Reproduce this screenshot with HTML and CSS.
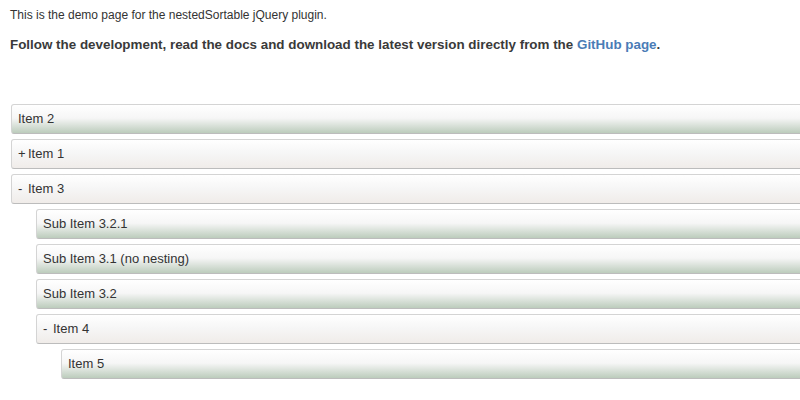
FILE: index.html
```html
<!DOCTYPE html>
<html>
<head>
<meta charset="utf-8">
<link rel="stylesheet" href="styles.css">
</head>
<body>
<p class="intro">This is the demo page for the nestedSortable jQuery plugin.</p>
<p class="follow">Follow the development, read the docs and download the latest version directly from the <a href="#">GitHub page</a>.</p>
<ol class="sortable">
  <li class="leaf"><div class="row">Item 2</div></li>
  <li class="branch"><div class="row"><span class="disclose">+</span>Item 1</div></li>
  <li class="branch"><div class="row"><span class="disclose">-</span>Item 3</div>
    <ol class="sub">
      <li class="leaf"><div class="row">Sub Item 3.2.1</div></li>
      <li class="leaf"><div class="row">Sub Item 3.1 (no nesting)</div></li>
      <li class="leaf"><div class="row">Sub Item 3.2</div></li>
      <li class="branch"><div class="row"><span class="disclose">-</span>Item 4</div>
        <ol class="sub">
          <li class="leaf"><div class="row">Item 5</div></li>
        </ol>
      </li>
    </ol>
  </li>
</ol>
</body>
</html>
```

FILE: styles.css
```css
html, body {
  margin: 0;
  padding: 0;
  overflow: hidden;
  background: #fff;
}
body {
  font-family: "Liberation Sans", Arial, sans-serif;
  font-size: 12px;
  color: #333;
  padding: 0 0 0 10px;
}
.intro {
  margin: 0;
  padding-top: 8px;
  line-height: 15px;
}
.follow {
  margin: 14px 0 0 0;
  font-weight: bold;
  font-size: 13.4px;
  line-height: 16px;
  color: #3a3a3a;
}
.follow a {
  color: #4a7cb6;
  text-decoration: none;
}
ol.sortable {
  list-style: none;
  margin: 51px -40px 0 1px;
  padding: 0;
}
ol.sub {
  list-style: none;
  margin: 0 0 0 25px;
  padding: 0;
}
.sortable li {
  margin: 5px 0 0 0;
  padding: 0;
}
.row {
  border: 1px solid #d4d4d4;
  border-bottom-color: #bcbcbc;
  border-radius: 3px;
  padding: 6px;
  height: 16px;
  font-size: 13px;
  line-height: 16px;
  color: #333;
  background: linear-gradient(to bottom, #ffffff 0%, #f6f6f6 47%, #ededed 100%);
}
.leaf > .row {
  background: linear-gradient(to bottom, #ffffff 0%, #f6f6f6 47%, #bcccbc 100%);
}
.branch > .row {
  background: linear-gradient(to bottom, #ffffff 0%, #f6f6f6 47%, #f0ece9 100%);
}
.disclose {
  display: inline-block;
  width: 10px;
}
```
